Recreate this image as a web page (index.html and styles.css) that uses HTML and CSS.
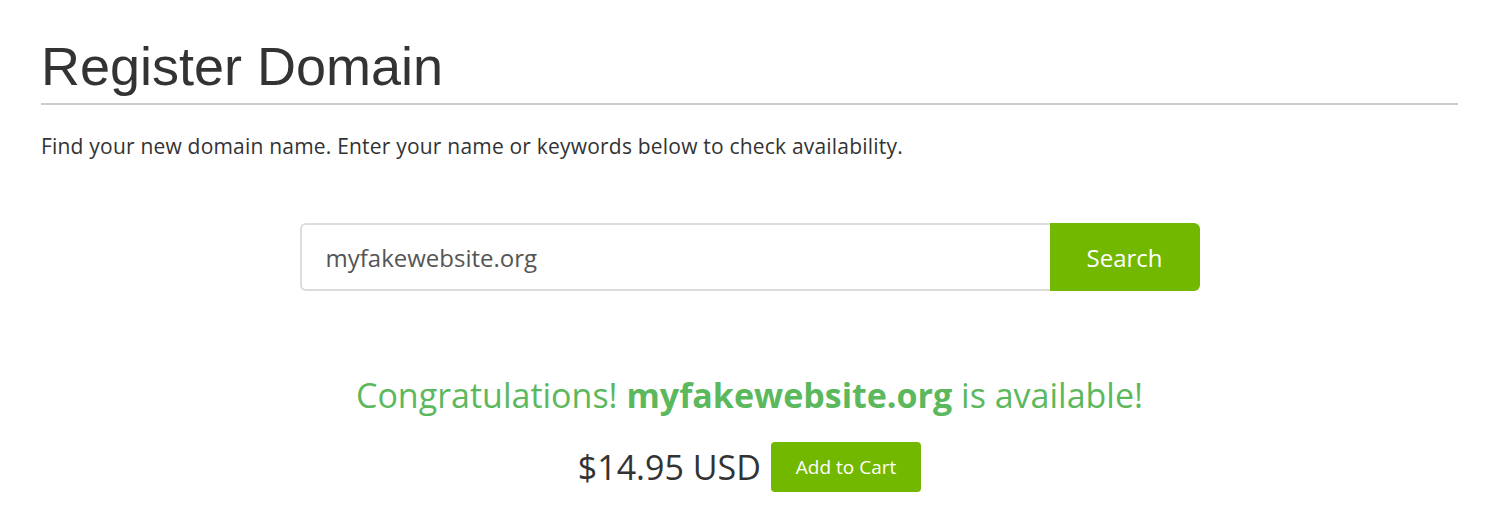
FILE: index.html
```html
<!DOCTYPE html>
<html lang="en">
<head>
    <meta charset="UTF-8">
    <title>Register Domain</title>
    <link rel="stylesheet" href="styles.css">
</head>
<body>
    <div class="page">
        <h1 class="page-title">Register Domain</h1>
        <p class="intro">Find your new domain name. Enter your name or keywords below to check availability.</p>

        <!-- Domain search -->
        <form class="search-form">
            <input type="text" class="search-input" value="myfakewebsite.org">
            <button type="submit" class="search-btn">Search</button>
        </form>

        <!-- Result -->
        <div class="result">
            <p class="result-msg">Congratulations! <strong>myfakewebsite.org</strong> is available!</p>
            <div class="result-price">
                <span class="price">$14.95 USD</span>
                <button type="button" class="cart-btn">Add to Cart</button>
            </div>
        </div>
    </div>
</body>
</html>
```

FILE: styles.css
```css
body {
    margin: 0;
    font-family: "Open Sans", sans-serif;
    color: #333;
    background-color: #fff;
}

.page {
    padding: 36px 44px 0 41px;
}

.page-title {
    font-family: "Liberation Sans", Arial, sans-serif;
    font-weight: normal;
    font-size: 54px;
    line-height: 60px;
    margin: 0;
    padding-bottom: 7px;
    border-bottom: 2px solid #ccc;
    color: #333;
}

.intro {
    font-size: 21px;
    letter-spacing: 0.2px;
    margin: 28px 0 0;
    line-height: 26px;
}

/* Search bar */
.search-form {
    display: flex;
    width: 900px;
    margin: 64px auto 0;
}

.search-input {
    flex: 1;
    height: 68px;
    box-sizing: border-box;
    border: 2px solid #ddd;
    border-right: none;
    border-radius: 6px 0 0 6px;
    padding: 0 24px;
    font-family: "Open Sans", sans-serif;
    font-size: 24px;
    color: #555;
    outline: none;
}

.search-btn {
    width: 150px;
    height: 68px;
    border: none;
    border-radius: 0 6px 6px 0;
    background-color: #72b800;
    color: #fff;
    font-family: "Open Sans", sans-serif;
    font-size: 24px;
    cursor: pointer;
}

/* Availability result */
.result {
    text-align: center;
    margin-top: 82px;
}

.result-msg {
    margin: 0;
    font-size: 34px;
    line-height: 44px;
    color: #5cb85c;
}

.result-msg strong {
    font-weight: bold;
}

.result-price {
    display: flex;
    justify-content: center;
    align-items: center;
    gap: 10px;
    margin-top: 25px;
}

.price {
    font-size: 34px;
    color: #333;
}

.cart-btn {
    height: 50px;
    padding: 0 25px;
    border: none;
    border-radius: 4px;
    background-color: #72b800;
    color: #fff;
    font-family: "Open Sans", sans-serif;
    font-size: 19px;
    cursor: pointer;
}
```
